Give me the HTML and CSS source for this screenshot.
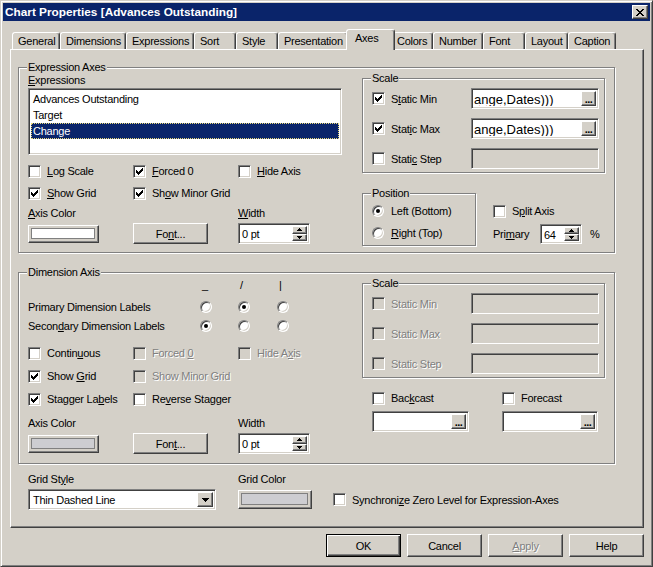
FILE: index.html
```
<!DOCTYPE html>
<html lang="en">
<head>
<meta charset="utf-8">
<title>Chart Properties</title>
<link rel="stylesheet" href="styles.css">
</head>
<body>
<div class="window">
  <div class="titlebar">
    <span class="title">Chart Properties [Advances Outstanding]</span>
    <span class="close-btn"><svg class="px" width="8" height="7" viewBox="0 0 8 7"><path d="M0 0h2v1h-2zM6 0h2v1h-2zM1 1h2v1h-2zM5 1h2v1h-2zM2 2h4v1h-4zM3 3h2v1h-2zM2 4h4v1h-4zM1 5h2v1h-2zM5 5h2v1h-2zM0 6h2v1h-2zM6 6h2v1h-2z"/></svg></span>
  </div>

  <div class="tabstrip">
    <div class="tab tab-general">General</div>
    <div class="tab tab-dimensions">Dimensions</div>
    <div class="tab tab-expressions">Expressions</div>
    <div class="tab tab-sort">Sort</div>
    <div class="tab tab-style">Style</div>
    <div class="tab tab-presentation">Presentation</div>
    <div class="tab tab-axes active">Axes</div>
    <div class="tab tab-colors">Colors</div>
    <div class="tab tab-number">Number</div>
    <div class="tab tab-font">Font</div>
    <div class="tab tab-layout">Layout</div>
    <div class="tab tab-caption">Caption</div>
  </div>

  <div class="panel">
    <!-- Expression Axes -->
    <div class="group group-expr">
      <span class="legend">Expression Axes</span>
      <div class="group-body">
        <div class="col-left">
          <div class="caption cap-expr"><u>E</u>xpressions</div>
          <div class="listbox">
            <div class="list-item">Advances Outstanding</div>
            <div class="list-item">Target</div>
            <div class="list-item selected">Change</div>
          </div>
          <div class="opt-grid expr-opts">
            <div class="opt"><span class="cb"></span><span><u>L</u>og Scale</span></div>
            <div class="opt"><span class="cb"><svg class="px" width="7" height="7" viewBox="0 0 7 7"><path d="M6 0h1v1h-1zM5 1h2v1h-2zM0 2h1v1h-1zM4 2h3v1h-3zM0 3h2v1h-2zM3 3h3v1h-3zM0 4h5v1h-5zM1 5h3v1h-3zM2 6h1v1h-1z"/></svg></span><span><u>F</u>orced 0</span></div>
            <div class="opt"><span class="cb"></span><span><u>H</u>ide Axis</span></div>
            <div class="opt"><span class="cb"><svg class="px" width="7" height="7" viewBox="0 0 7 7"><path d="M6 0h1v1h-1zM5 1h2v1h-2zM0 2h1v1h-1zM4 2h3v1h-3zM0 3h2v1h-2zM3 3h3v1h-3zM0 4h5v1h-5zM1 5h3v1h-3zM2 6h1v1h-1z"/></svg></span><span><u>S</u>how Grid</span></div>
            <div class="opt"><span class="cb"><svg class="px" width="7" height="7" viewBox="0 0 7 7"><path d="M6 0h1v1h-1zM5 1h2v1h-2zM0 2h1v1h-1zM4 2h3v1h-3zM0 3h2v1h-2zM3 3h3v1h-3zM0 4h5v1h-5zM1 5h3v1h-3zM2 6h1v1h-1z"/></svg></span><span>Sh<u>o</u>w Minor Grid</span></div>
          </div>
          <div class="cap-grid cap-axis">
            <span><u>A</u>xis Color</span><span></span><span><u>W</u>idth</span>
          </div>
          <div class="ctrl-grid">
            <span class="colorbtn"><span class="swatch swatch-white"></span></span>
            <span class="btn btn-font">Fo<u>n</u>t...</span>
            <span class="field spin spin-width"><span class="spin-text">0 pt</span><span class="spin-btns"><span class="spin-btn"><svg class="px" width="5" height="3" viewBox="0 0 5 3"><path d="M2 0h1v1h-1zM1 1h3v1h-3zM0 2h5v1h-5z"/></svg></span><span class="spin-btn"><svg class="px" width="5" height="3" viewBox="0 0 5 3"><path d="M0 0h5v1h-5zM1 1h3v1h-3zM2 2h1v1h-1z"/></svg></span></span></span>
          </div>
        </div>
        <div class="col-right">
          <div class="group scale-group">
            <span class="legend">Scale</span>
            <div class="scale-rows">
              <div class="opt"><span class="cb"><svg class="px" width="7" height="7" viewBox="0 0 7 7"><path d="M6 0h1v1h-1zM5 1h2v1h-2zM0 2h1v1h-1zM4 2h3v1h-3zM0 3h2v1h-2zM3 3h3v1h-3zM0 4h5v1h-5zM1 5h3v1h-3zM2 6h1v1h-1z"/></svg></span><span>S<u>t</u>atic Min</span></div>
              <div class="field field-ell"><span class="field-text expr-text"><span class="squiggle">ange</span>,Dates)))</span><span class="ell-btn">...</span></div>
              <div class="opt"><span class="cb"><svg class="px" width="7" height="7" viewBox="0 0 7 7"><path d="M6 0h1v1h-1zM5 1h2v1h-2zM0 2h1v1h-1zM4 2h3v1h-3zM0 3h2v1h-2zM3 3h3v1h-3zM0 4h5v1h-5zM1 5h3v1h-3zM2 6h1v1h-1z"/></svg></span><span>Stat<u>i</u>c Max</span></div>
              <div class="field field-ell"><span class="field-text expr-text">ange,Dates)))</span><span class="ell-btn">...</span></div>
              <div class="opt"><span class="cb"></span><span>Stati<u>c</u> Step</span></div>
              <div class="field field-off"></div>
            </div>
          </div>
          <div class="pos-row">
            <div class="group pos-group">
              <span class="legend">Position</span>
              <div class="pos-rows">
                <div class="opt ropt"><span class="rb on"></span><span>Left (Bottom)</span></div>
                <div class="opt ropt"><span class="rb"></span><span><u>R</u>ight (Top)</span></div>
              </div>
            </div>
            <div class="split-col">
              <div class="opt"><span class="cb"></span><span>S<u>p</u>lit Axis</span></div>
              <div class="primary-row">
                <span class="primary-label">Pri<u>m</u>ary</span>
                <span class="field spin spin-primary"><span class="spin-text">64</span><span class="spin-btns"><span class="spin-btn"><svg class="px" width="5" height="3" viewBox="0 0 5 3"><path d="M2 0h1v1h-1zM1 1h3v1h-3zM0 2h5v1h-5z"/></svg></span><span class="spin-btn"><svg class="px" width="5" height="3" viewBox="0 0 5 3"><path d="M0 0h5v1h-5zM1 1h3v1h-3zM2 2h1v1h-1z"/></svg></span></span></span>
                <span class="pct">%</span>
              </div>
            </div>
          </div>
        </div>
      </div>
    </div>

    <!-- Dimension Axis -->
    <div class="group group-dim">
      <span class="legend">Dimension Axis</span>
      <div class="group-body">
        <div class="col-left">
          <div class="orient-grid orient-head"><span></span><span class="glyph">_</span><span class="glyph">/</span><span class="glyph">|</span></div>
          <div class="orient-grid orient-primary"><span>Primary Dimension Labels</span><span class="rb"></span><span class="rb on"></span><span class="rb"></span></div>
          <div class="orient-grid orient-secondary"><span>Secon<u>d</u>ary Dimension Labels</span><span class="rb on"></span><span class="rb"></span><span class="rb"></span></div>
          <div class="opt-grid dim-opts">
            <div class="opt"><span class="cb"></span><span>Contin<u>u</u>ous</span></div>
            <div class="opt off"><span class="cb cb-off"></span><span>Forced <u>0</u></span></div>
            <div class="opt off"><span class="cb cb-off"></span><span>Hide A<u>x</u>is</span></div>
            <div class="opt"><span class="cb"><svg class="px" width="7" height="7" viewBox="0 0 7 7"><path d="M6 0h1v1h-1zM5 1h2v1h-2zM0 2h1v1h-1zM4 2h3v1h-3zM0 3h2v1h-2zM3 3h3v1h-3zM0 4h5v1h-5zM1 5h3v1h-3zM2 6h1v1h-1z"/></svg></span><span>Show <u>G</u>rid</span></div>
            <div class="opt off"><span class="cb cb-off"></span><span>Show Minor Grid</span></div>
            <span></span>
            <div class="opt"><span class="cb"><svg class="px" width="7" height="7" viewBox="0 0 7 7"><path d="M6 0h1v1h-1zM5 1h2v1h-2zM0 2h1v1h-1zM4 2h3v1h-3zM0 3h2v1h-2zM3 3h3v1h-3zM0 4h5v1h-5zM1 5h3v1h-3zM2 6h1v1h-1z"/></svg></span><span>Stagger La<u>b</u>els</span></div>
            <div class="opt"><span class="cb"></span><span>Re<u>v</u>erse Stagger</span></div>
          </div>
          <div class="cap-grid cap-axis-dim">
            <span>Axis Color</span><span></span><span>Width</span>
          </div>
          <div class="ctrl-grid">
            <span class="colorbtn"><span class="swatch swatch-gray"></span></span>
            <span class="btn btn-font">Fon<u>t</u>...</span>
            <span class="field spin spin-width"><span class="spin-text">0 pt</span><span class="spin-btns"><span class="spin-btn"><svg class="px" width="5" height="3" viewBox="0 0 5 3"><path d="M2 0h1v1h-1zM1 1h3v1h-3zM0 2h5v1h-5z"/></svg></span><span class="spin-btn"><svg class="px" width="5" height="3" viewBox="0 0 5 3"><path d="M0 0h5v1h-5zM1 1h3v1h-3zM2 2h1v1h-1z"/></svg></span></span></span>
          </div>
        </div>
        <div class="col-right">
          <div class="group scale-group">
            <span class="legend">Scale</span>
            <div class="scale-rows">
              <div class="opt off"><span class="cb cb-off"></span><span>Static Min</span></div>
              <div class="field field-off"></div>
              <div class="opt off"><span class="cb cb-off"></span><span>Static Max</span></div>
              <div class="field field-off"></div>
              <div class="opt off"><span class="cb cb-off"></span><span>Static Step</span></div>
              <div class="field field-off"></div>
            </div>
          </div>
          <div class="cast-row">
            <div class="cast-col cast-col-back">
              <div class="opt"><span class="cb"></span><span>Bac<u>k</u>cast</span></div>
              <div class="field field-ell cast-field cast-back"><span class="field-text"></span><span class="ell-btn">...</span></div>
            </div>
            <div class="cast-col">
              <div class="opt"><span class="cb"></span><span>Forecast</span></div>
              <div class="field field-ell cast-field cast-fore"><span class="field-text"></span><span class="ell-btn">...</span></div>
            </div>
          </div>
        </div>
      </div>
    </div>

    <!-- Bottom -->
    <div class="bottom-grid">
      <span>Grid St<u>y</u>le</span>
      <span>Grid Color</span>
      <span></span>
      <div class="field combo"><span class="combo-text">Thin Dashed Line</span><span class="combo-btn"><svg class="px" width="7" height="4" viewBox="0 0 7 4"><path d="M0 0h7v1h-7zM1 1h5v1h-5zM2 2h3v1h-3zM3 3h1v1h-1z"/></svg></span></div>
      <span class="colorbtn gridcolor"><span class="swatch swatch-gray"></span></span>
      <div class="opt"><span class="cb"></span><span>Synchroni<u>z</u>e Zero Level for Expression-Axes</span></div>
    </div>
  </div>

  <div class="dlg-buttons">
    <span class="btn dlg-btn btn-default">OK</span>
    <span class="btn dlg-btn">Cancel</span>
    <span class="btn dlg-btn btn-off"><u>A</u>pply</span>
    <span class="btn dlg-btn">Help</span>
  </div>
</div>
</body>
</html>
```

FILE: styles.css
```
* { box-sizing: border-box; }
html, body { margin: 0; padding: 0; }
body {
  font-family: "Liberation Sans", Arial, sans-serif;
  font-size: 11px;
  letter-spacing: -0.25px;
  color: #000;
  background: #d4d0c8;
}
u { text-decoration: underline; text-underline-offset: 1px; }
.px { display: block; shape-rendering: crispEdges; fill: #000; }

.window {
  width: 653px;
  height: 567px;
  border: 1px solid;
  border-color: #d4d0c8 #404040 #404040 #d4d0c8;
  box-shadow: inset 1px 1px #fff, inset -1px -1px #808080;
  padding: 2px;
  background: #d4d0c8;
  overflow: hidden;
}

/* Title bar */
.titlebar {
  height: 18px;
  background: #0a246a;
  display: flex;
  align-items: center;
  justify-content: space-between;
  padding: 0 2px;
}
.title {
  color: #fff;
  font-weight: bold;
  font-size: 11.8px;
  letter-spacing: 0;
  line-height: 18px;
  white-space: nowrap;
}
.close-btn {
  width: 16px;
  height: 14px;
  background: #d4d0c8;
  border: 1px solid;
  border-color: #fff #404040 #404040 #fff;
  box-shadow: inset -1px -1px #808080;
  display: flex;
  align-items: center;
  justify-content: center;
}

/* Tabs */
.tabstrip {
  margin-top: 8px;
  height: 20px;
  display: flex;
  align-items: flex-end;
  padding-left: 9px;
}
.tab {
  height: 17px;
  border: 1px solid;
  border-bottom: none;
  border-color: #fff #404040 transparent #fff;
  box-shadow: inset -1px 0 #808080;
  border-radius: 3px 3px 0 0;
  padding-left: 5px;
  line-height: 16px;
  white-space: nowrap;
  overflow: hidden;
  background: #d4d0c8;
}
.tab.active {
  height: 21px;
  margin: 0 -2px -1px -2px;
  padding-left: 8px;
  line-height: 17px;
  position: relative;
  z-index: 1;
}
.tab-general { width: 48px; }
.tab-dimensions { width: 66px; }
.tab-expressions { width: 68px; }
.tab-sort { width: 42px; }
.tab-style { width: 42px; }
.tab-presentation { width: 70px; }
.tab-axes { width: 49px; }
.tab-colors { width: 40px; padding-left: 3px; }
.tab-number { width: 50px; }
.tab-font { width: 42px; }
.tab-layout { width: 43px; }
.tab-caption { width: 48px; }

/* Panel */
.panel {
  margin-left: 7px;
  width: 634px;
  height: 479px;
  border: 1px solid;
  border-color: #fff #404040 #404040 #fff;
  box-shadow: inset -1px -1px #808080;
  padding: 17px 0 0 7px;
}

/* Group boxes */
.group {
  position: relative;
  border: 1px solid #808080;
  box-shadow: inset 1px 1px #fff, 1px 1px #fff;
}
.legend {
  position: absolute;
  top: -8px;
  left: 8px;
  padding: 0 1px;
  line-height: 14px;
  background: #d4d0c8;
  white-space: nowrap;
}
.group-expr { width: 597px; height: 186px; }
.group-dim { width: 597px; height: 192px; margin-top: 19px; }
.group-body { display: flex; padding-left: 9px; }
.col-left { width: 314px; flex: none; }
.col-right { margin-left: 20px; width: 244px; flex: none; }

.caption { line-height: 14px; height: 14px; }
.cap-expr { margin-top: 5px; }

/* Sunken fields */
.field, .listbox, .cb, .rb {
  border: 1px solid;
  border-color: #808080 #fff #fff #808080;
  box-shadow: inset 1px 1px #404040, inset -1px -1px #d4d0c8;
  background: #fff;
}
.listbox {
  margin-top: 1px;
  height: 67px;
  padding: 2px;
}
.list-item { height: 16px; line-height: 16px; padding-left: 2px; white-space: nowrap; }
.list-item.selected {
  background: #0a246a;
  color: #fff;
  outline: 1px dotted #e8d878;
  outline-offset: -1px;
}

/* Options */
.opt { display: flex; align-items: center; gap: 6px; height: 16px; white-space: nowrap; }
.ropt { gap: 7px; }
.cb { width: 13px; height: 13px; padding: 2px; flex: none; }
.cb-off { background: #d4d0c8; }
.rb {
  width: 12px;
  height: 12px;
  border-radius: 50%;
  flex: none;
  display: flex;
  align-items: center;
  justify-content: center;
  justify-self: start;
}
.rb.on::after {
  content: "";
  width: 4px;
  height: 4px;
  border-radius: 50%;
  background: #000;
}
.off { color: #808080; text-shadow: 1px 1px 0 #fff; }

.opt-grid {
  display: grid;
  grid-template-columns: 105px 105px 1fr;
  grid-auto-rows: 16px;
  row-gap: 6px;
}
.expr-opts { margin-top: 8px; }
.dim-opts { margin-top: 11px; row-gap: 7px; }

.cap-grid {
  display: grid;
  grid-template-columns: 105px 105px 1fr;
  height: 14px;
  line-height: 14px;
}
.cap-axis { margin-top: 5px; }
.cap-axis-dim { margin-top: 9px; }

.ctrl-grid {
  display: grid;
  grid-template-columns: 105px 105px 1fr;
  height: 21px;
  align-items: center;
  margin-top: 3px;
}

/* Buttons */
.btn {
  display: flex;
  align-items: center;
  justify-content: center;
  border: 1px solid;
  border-color: #fff #404040 #404040 #fff;
  box-shadow: inset -1px -1px #808080;
  background: #d4d0c8;
  white-space: nowrap;
}
.btn-font { width: 75px; height: 21px; }
.colorbtn {
  display: block;
  width: 71px;
  height: 18px;
  padding: 2px 3px 3px 2px;
  border: 1px solid;
  border-color: #fff #404040 #404040 #fff;
  box-shadow: inset -1px -1px #808080;
  background: #d4d0c8;
}
.swatch { display: block; height: 100%; border: 1px solid #808080; }
.swatch-white { background: #fff; }
.swatch-gray { background: #cdcdd1; }

/* Spinners */
.spin { display: flex; height: 21px; padding: 2px; }
.spin-width { width: 72px; }
.spin-text { flex: 1; line-height: 17px; padding-left: 1px; white-space: nowrap; }
.spin-btns { display: flex; flex-direction: column; width: 15px; }
.spin-btn {
  flex: 1;
  display: flex;
  align-items: center;
  justify-content: center;
  border: 1px solid;
  border-color: #fff #404040 #404040 #fff;
  box-shadow: inset -1px -1px #808080;
  background: #d4d0c8;
}

/* Scale groups */
.scale-group { width: 243px; height: 95px; margin-top: 10px; }
.scale-rows {
  display: grid;
  grid-template-columns: 99px 128px;
  grid-auto-rows: 21px;
  row-gap: 9px;
  align-items: center;
  padding: 9px 0 0 9px;
}
.field-ell { display: flex; height: 21px; padding: 2px; }
.field-text { flex: 1; line-height: 17px; padding-left: 1px; white-space: nowrap; overflow: hidden; letter-spacing: 0; }
.expr-text { font-size: 13px; padding-left: 0; }
.squiggle { text-decoration: underline wavy #e00000; text-decoration-thickness: 1px; text-underline-offset: 1px; }
.ell-btn {
  width: 15px;
  flex: none;
  display: flex;
  align-items: flex-end;
  justify-content: center;
  font-weight: bold;
  line-height: 10px;
  letter-spacing: -0.5px;
  border: 1px solid;
  border-color: #fff #404040 #404040 #fff;
  box-shadow: inset -1px -1px #808080;
  background: #d4d0c8;
  padding-bottom: 1px;
}
.field-off { height: 21px; background: #d4d0c8; }

/* Position */
.pos-row { display: flex; margin-top: 20px; }
.pos-group { width: 114px; height: 53px; flex: none; }
.pos-rows {
  display: grid;
  grid-auto-rows: 16px;
  row-gap: 6px;
  padding: 9px 0 0 9px;
}
.split-col { margin-left: 17px; padding-top: 10px; }
.primary-row { display: flex; align-items: center; margin-top: 5px; height: 20px; }
.primary-label { width: 47px; }
.spin-primary { width: 42px; height: 20px; }
.pct { margin-left: 8px; }

/* Orientation */
.orient-grid {
  display: grid;
  grid-template-columns: 172px 38px 39px 12px;
  align-items: center;
  height: 16px;
  white-space: nowrap;
}
.orient-head { margin-top: 5px; height: 14px; line-height: 14px; }
.orient-primary { margin-top: 7px; }
.orient-secondary { margin-top: 3px; }
.glyph { text-align: left; padding-left: 2px; }

/* Back/forecast */
.cast-row { display: flex; margin-top: 12px; padding-left: 10px; }
.cast-col { flex: none; }
.cast-col-back { width: 130px; }
.cast-field { margin-top: 5px; }
.cast-back { width: 97px; }
.cast-fore { width: 96px; }

/* Bottom */
.bottom-grid {
  display: grid;
  grid-template-columns: 210px 95px 1fr;
  grid-template-rows: 14px 21px;
  row-gap: 3px;
  align-items: center;
  margin: 8px 0 0 10px;
  line-height: 14px;
}
.combo { display: flex; width: 188px; height: 21px; padding: 2px; }
.combo-text { flex: 1; line-height: 17px; padding-left: 2px; white-space: nowrap; }
.combo-btn {
  width: 16px;
  display: flex;
  align-items: center;
  justify-content: center;
  border: 1px solid;
  border-color: #fff #404040 #404040 #fff;
  box-shadow: inset -1px -1px #808080;
  background: #d4d0c8;
}
.gridcolor { width: 74px; height: 19px; }

/* Dialog buttons */
.dlg-buttons {
  display: flex;
  justify-content: flex-end;
  gap: 6px;
  margin-top: 6px;
  padding-right: 6px;
}
.dlg-btn { width: 75px; height: 23px; }
.btn-default {
  border: 1px solid #000;
  box-shadow: inset 1px 1px #fff, inset -1px -1px #404040, inset -2px -2px #808080;
}
.btn-off { color: #808080; text-shadow: 1px 1px 0 #fff; }
```
